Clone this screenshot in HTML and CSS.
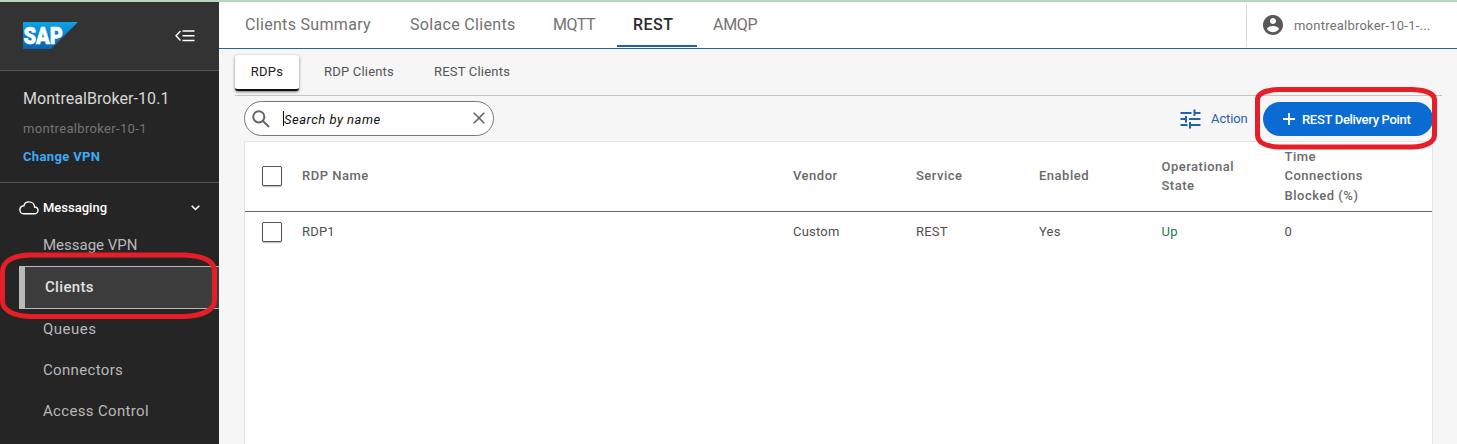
FILE: index.html
```html
<!DOCTYPE html>
<html lang="en">
<head>
<meta charset="utf-8">
<title>Clients - REST</title>
<link rel="stylesheet" href="styles.css">
</head>
<body>
<div class="app">
  <aside class="sidebar">
    <div class="brand">
      <svg class="logo" width="55" height="27" viewBox="0 0 55 27">
        <defs><linearGradient id="sap" x1="0" y1="0" x2="0" y2="1"><stop offset="0" stop-color="#0ba4e6"/><stop offset="1" stop-color="#0a62b0"/></linearGradient></defs>
        <path d="M0 0H55L28 27H0Z" fill="url(#sap)"/>
        <text class="logo-text" x="0.5" y="21.5" textLength="39.5" lengthAdjust="spacingAndGlyphs">SAP</text>
      </svg>
      <svg class="collapse" width="20" height="12" viewBox="0 0 20 12" fill="none" stroke="#fff" stroke-width="1.4"><path d="M5.5 1L1 5.7L5.5 10.5M7.5 1H19.5M7.5 5.7H19.5M7.5 10.5H19.5"/></svg>
    </div>
    <div class="vpn">
      <div class="vpn-name">MontrealBroker-10.1</div>
      <div class="vpn-host">montrealbroker-10-1</div>
      <a class="vpn-change">Change VPN</a>
    </div>
    <nav class="menu">
      <div class="group">
        <svg width="20" height="14" viewBox="0 0 20 14" fill="none" stroke="#fff" stroke-width="1.4"><path d="M5 12.8H15.2C17.3 12.8 19 11.3 19 9.4C19 7.3 17.4 6.1 15.6 6C15.3 3 12.8 .9 10 .9C7.300 .9 5.400 2.500 4.900 4.800C2.600 5 .9 6.700 .9 8.900C.9 11.100 2.700 12.800 5 12.800Z"/></svg>
        <span class="group-name">Messaging</span>
        <svg width="9" height="6" viewBox="0 0 9 6" fill="none" stroke="#fff" stroke-width="1.600"><path d="M.7 .8L4.500 4.500L8.300 .8"/></svg>
      </div>
      <a class="item vpn-item">Message VPN</a>
      <a class="item selected">Clients</a>
      <a class="item queues">Queues</a>
      <a class="item connectors">Connectors</a>
      <a class="item access">Access Control</a>
    </nav>
  </aside>
  <main class="main">
    <header class="topbar">
      <a class="tab t1">Clients Summary</a>
      <a class="tab t2">Solace Clients</a>
      <a class="tab t3">MQTT</a>
      <a class="tab t4 current">REST</a>
      <a class="tab t5">AMQP</a>
      <div class="user">
        <svg width="20" height="20" viewBox="2 2 20 20" fill="#58585a"><path d="M12 2C6.480 2 2 6.480 2 12s4.480 10 10 10 10-4.480 10-10S17.520 2 12 2zm0 3c1.660 0 3 1.340 3 3s-1.340 3-3 3-3-1.340-3-3 1.340-3 3-3zm0 14.200c-2.500 0-4.710-1.280-6-3.220.03-1.990 4-3.080 6-3.080 1.990 0 5.970 1.090 6 3.080-1.290 1.940-3.500 3.220-6 3.220z"/></svg>
        <span>montrealbroker-10-1-...</span>
      </div>
    </header>
    <div class="subtabs">
      <a class="sub active">RDPs</a>
      <a class="sub s2">RDP Clients</a>
      <a class="sub s3">REST Clients</a>
    </div>
    <div class="toolbar">
      <div class="search">
        <svg width="18" height="18" viewBox="0 0 18 18" fill="none" stroke="#666" stroke-width="2"><circle cx="6.800" cy="6.800" r="5.600"/><path d="M10.800 10.800L17 17"/></svg>
        <span class="caret"></span>
        <span class="placeholder">Search by name</span>
        <svg class="clear" width="12" height="12" viewBox="0 0 12 12" stroke="#5c6659" stroke-width="1.600"><path d="M.7 .7L11.300 11.300M11.300 .7L.7 11.300"/></svg>
      </div>
      <a class="action">
        <svg width="21" height="20" viewBox="0 0 21 20" stroke="#2560ae" stroke-width="2"><path d="M.5 4H11.500M14.500 4H20.500M14.500 .5V7M.5 10H6M9 10H20.500M6 7V13.500M.5 16H7.500M10 16H20.500M10 13V19.500"/></svg>
        <span>Action</span>
      </a>
      <button class="create">
        <svg width="12" height="12" viewBox="0 0 12 12" stroke="#fff" stroke-width="1.800"><path d="M6 0V12M0 6H12"/></svg>
        <span>REST Delivery Point</span>
      </button>
    </div>
    <section class="table">
      <div class="row head">
        <span class="check"></span>
        <span>RDP Name</span><span>Vendor</span><span>Service</span><span>Enabled</span>
        <span>Operational<br>State</span><span>Time<br>Connections<br>Blocked (%)</span>
      </div>
      <div class="row data">
        <span class="check"></span>
        <span>RDP1</span><span>Custom</span><span>REST</span><span>Yes</span><span class="up">Up</span><span>0</span>
      </div>
    </section>
  </main>
</div>
<svg class="mark mark-clients" width="219" height="72" viewBox="0 0 219 72"><path d="M30 5H184C205 6 214.500 12 214.500 21V50C214.500 60 203 66 184 66.500H30C13 66 2.500 60 2.500 51V22C2.500 11 13 5.500 30 5Z"/></svg>
<svg class="mark mark-create" width="184" height="66" viewBox="0 0 184 66"><path d="M25 4.500H158C173 5 180.500 9 180.500 15V50C180.500 57 172 61.500 158 62H25C11 61.500 3.500 57 3.500 50V15C3.500 9 11 5 25 4.500Z"/></svg>
</body>
</html>
```
FILE: styles.css
```css
* { box-sizing: border-box; }
body { margin: 0; height: 444px; overflow: hidden; font-family: Roboto, "Liberation Sans", sans-serif; background: #f6f6f6; border-top: 2px solid #b5d6b8; position: relative; }
svg { display: block; flex: none; }
.app { display: flex; height: 442px; }
.sidebar { width: 219px; flex: none; background: #252525; color: #b9b9b9; }
.brand { height: 69px; background: #333; border-bottom: 1px solid #555; display: flex; align-items: flex-start; justify-content: space-between; padding: 20px 24px 0 23px; }
.logo-text { font: 900 23px Roboto, sans-serif; fill: #fff; stroke: #fff; stroke-width: .6; }
.collapse { margin-top: 8px; }
.vpn { height: 112px; border-bottom: 1px solid #555; padding: 17px 23px 0; white-space: nowrap; }
.vpn-name { font-size: 16px; line-height: 22px; color: #d8d8d8; letter-spacing: .06px; }
.vpn-host { font-size: 13px; line-height: 18px; color: #747474; margin-top: 10px; letter-spacing: .33px; }
.vpn-change { display: block; font-size: 13px; font-weight: 700; line-height: 18px; color: #3eaaf5; margin-top: 10px; letter-spacing: .35px; }
.menu { padding-top: 4px; }
.group { height: 41px; display: flex; align-items: center; padding: 0 19px; color: #fff; }
.group-name { font-size: 13px; font-weight: 500; flex: 1; margin-left: 4px; }
.item { display: block; height: 41px; line-height: 41px; font-size: 15px; padding-left: 43px; letter-spacing: .33px; }
.vpn-item { height: 38px; line-height: 34px; letter-spacing: 0; }
.selected { height: 43px; margin-left: 19px; padding-left: 20px; border: 1px solid #b9b9b9; border-left-width: 6px; border-right: 0; background: #3c3c3c; color: #e2e2e2; font-weight: 500; }
.queues { line-height: 40px; letter-spacing: .5px; }
.main { flex: 1; min-width: 0; display: flex; flex-direction: column; }
.topbar { height: 47px; background: #fff; border-bottom: 1px solid #1d65a5; display: flex; padding-left: 10px; flex: none; white-space: nowrap; }
.tab { padding-left: 16px; font-size: 16px; line-height: 45px; color: #727272; height: 45px; letter-spacing: .32px; }
.t1 { width: 165px; } .t2 { width: 144px; } .t3 { width: 79px; } .t4 { width: 80px; }
.current { border-bottom: 2px solid #1d65a5; color: #2b2b2b; font-weight: 500; letter-spacing: .5px; }
.tab.t3 { padding-left: 15px; letter-spacing: -.4px; }
.tab.t5 { letter-spacing: -.3px; }
.user { margin: 1px 0 1px auto; width: 211px; border-left: 1px solid #ddd; display: flex; align-items: center; padding-left: 16px; gap: 11px; font-size: 13px; color: #727272; letter-spacing: .22px; }
.subtabs { margin: 6px 15px 0 16px; height: 41px; border-bottom: 1px solid #c4c4c4; display: flex; font-size: 13px; line-height: 34px; color: #555; flex: none; letter-spacing: .2px; }
.sub { height: 36px; white-space: nowrap; }
.active { width: 64px; text-align: center; background: #fff; border-bottom: 2px solid #111; border-radius: 3px; box-shadow: 0 1px 3px #777; color: #222; }
.s2 { margin-left: 25px; width: 110px; }
.toolbar { height: 45px; padding: 5px 24px 0 25px; display: flex; align-items: flex-start; flex: none; }
.search { width: 250px; height: 35px; background: #fff; border: 1px solid #777; border-radius: 18px; display: flex; align-items: center; padding: 0 8px 0 7px; }
.caret { width: 1px; height: 15px; background: #000; margin-left: 13px; }
.placeholder { flex: 1; font-size: 13px; font-style: italic; color: #111; letter-spacing: .5px; padding-top: 1px; }
.clear { margin-bottom: 2px; }
.action { margin-left: auto; height: 35px; display: flex; align-items: center; gap: 10px; color: #2560ae; font-size: 13px; width: 83px; letter-spacing: -.1px; }
.create { margin-top: 1px; width: 170px; height: 34px; border: 0; border-radius: 17px; background: #0a6cd2; color: #fff; font: 500 13px Roboto, sans-serif; letter-spacing: -.31px; display: flex; align-items: center; gap: 7px; padding: 0 0 0 20px; white-space: nowrap; }
.table { flex: 1; margin: 0 24px 0 25px; background: #fff; border: 1px solid #e4e4e4; border-bottom: 0; }
.row { display: grid; grid-template-columns: 40px 491px 123px 123px 122.500px 123px 1fr; align-items: center; padding-left: 17px; font-size: 13px; }
.head { height: 70px; border-bottom: 1px solid #666; font-weight: 500; color: #6a6a6a; line-height: 19.500px; letter-spacing: .5px; padding-bottom: 1px; }
.data { height: 39px; color: #505050; letter-spacing: .2px; }
.check { width: 20px; height: 20px; border: 1px solid #555; border-radius: 2px; background: #fff; box-shadow: 0 1px 1px #bbb; }
.up { color: #1c7658; }
.mark { position: absolute; fill: none; stroke: #e61e28; stroke-width: 5; }
.mark-clients { left: 0; top: 248px; }
.mark-create { left: 1254px; top: 83px; }
```
